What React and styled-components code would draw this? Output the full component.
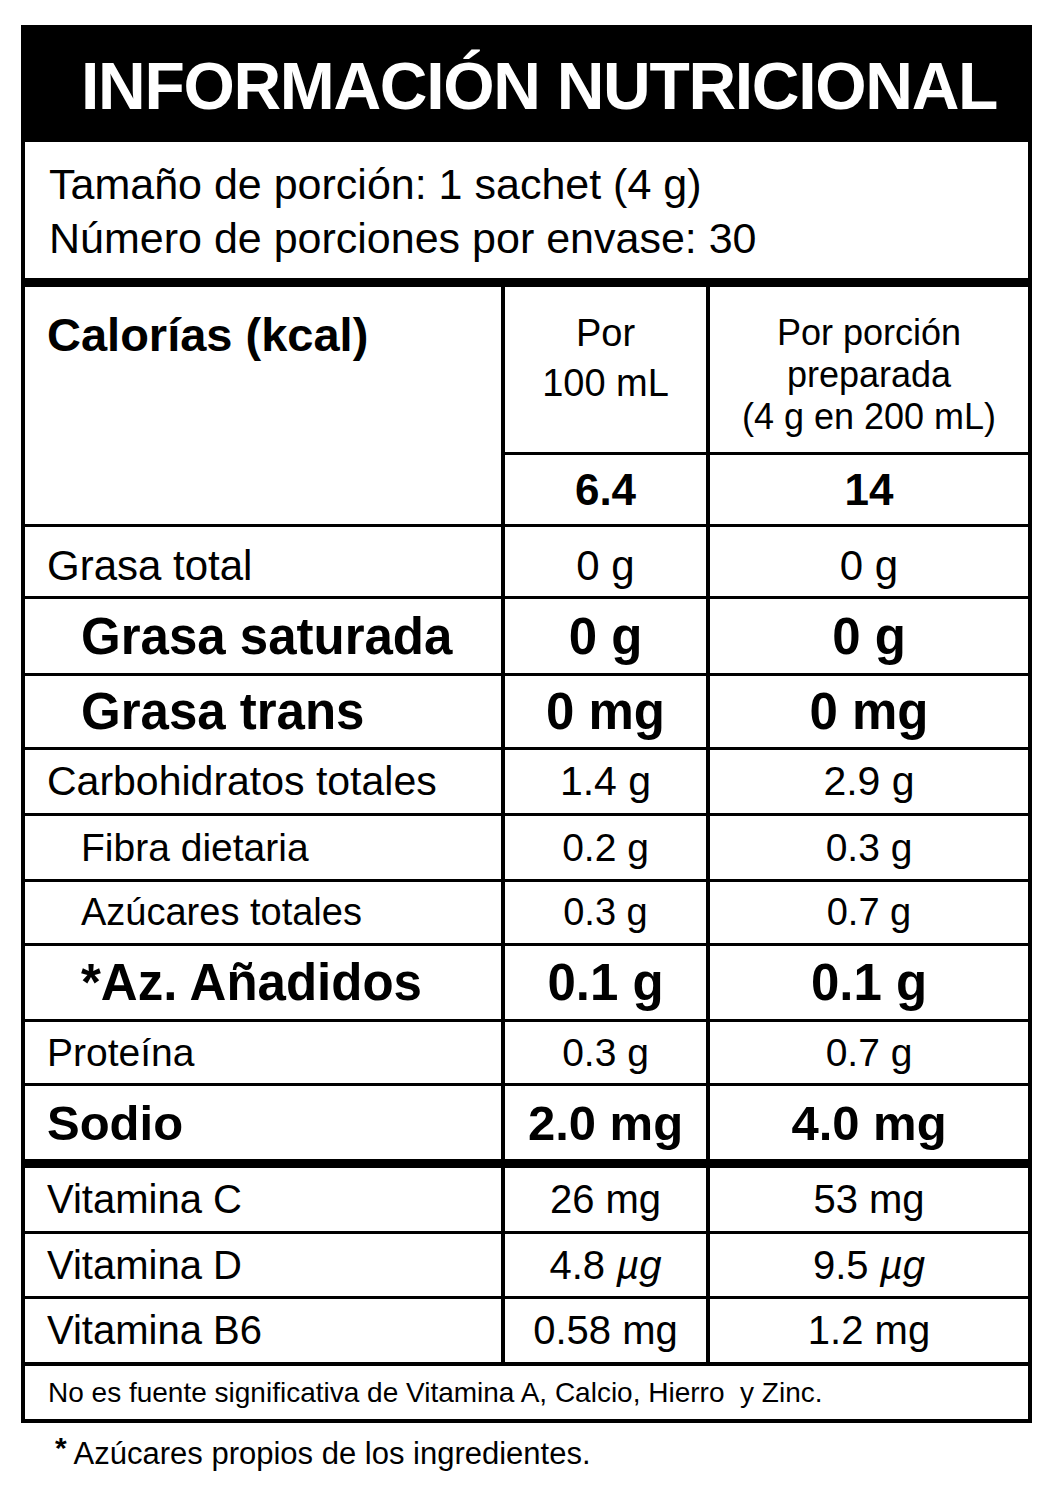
import React from 'react';
import styled, { createGlobalStyle } from 'styled-components';

const GlobalStyle = createGlobalStyle`
  html, body {
    margin: 0;
    padding: 0;
    background: #fff;
  }
  body {
    font-family: "Liberation Sans", Arial, sans-serif;
    color: #000;
  }
`;

const COLS = '476px 201px 318px';

const nutrients = [
  { label: 'Grasa total', a: '0 g', b: '0 g', h: 69, size: 42, shift: 8 },
  { label: 'Grasa saturada', a: '0 g', b: '0 g', h: 74, bold: true, indent: true, size: 51 },
  { label: 'Grasa trans', a: '0 mg', b: '0 mg', h: 71, bold: true, indent: true, size: 51 },
  { label: 'Carbohidratos totales', a: '1.4 g', b: '2.9 g', h: 63, size: 41 },
  { label: 'Fibra dietaria', a: '0.2 g', b: '0.3 g', h: 63, indent: true, size: 39 },
  { label: 'Azúcares totales', a: '0.3 g', b: '0.7 g', h: 61, indent: true, size: 38 },
  { label: '*Az. Añadidos', a: '0.1 g', b: '0.1 g', h: 73, bold: true, indent: true, size: 51 },
  { label: 'Proteína', a: '0.3 g', b: '0.7 g', h: 61, size: 39 },
  { label: 'Sodio', a: '2.0 mg', b: '4.0 mg', h: 73, bold: true, size: 49 },
];

const vitamins = [
  { label: 'Vitamina C', a: '26 mg', b: '53 mg', h: 63 },
  { label: 'Vitamina D', a: '4.8', b: '9.5', unit: 'µg', h: 62 },
  { label: 'Vitamina B6', a: '0.58 mg', b: '1.2 mg', h: 63 },
];

const App = () => {
  const renderValue = (v, unit) =>
    unit ? (
      <>
        {v}
        {'\u00a0'}
        <Micro>{unit}</Micro>
      </>
    ) : (
      v
    );

  const renderRows = (rows) =>
    rows.map((r) => (
      <Row key={r.label} $height={r.h} $shift={r.shift}>
        <Cell $indent={r.indent} $bold={r.bold} $size={r.size}>
          {r.label}
        </Cell>
        <Cell $center $bold={r.bold} $size={r.size}>
          {renderValue(r.a, r.unit)}
        </Cell>
        <Cell $center $bold={r.bold} $size={r.size}>
          {renderValue(r.b, r.unit)}
        </Cell>
      </Row>
    ));

  return (
    <Page>
      <GlobalStyle />
      <Label>
        <Header>INFORMACIÓN NUTRICIONAL</Header>
        <Serving>
          <div>Tamaño de porción: 1 sachet (4 g)</div>
          <div>Número de porciones por envase: 30</div>
        </Serving>

        <Table $top={9}>
          <CaloriesRow>
            <CaloriesLabel>Calorías (kcal)</CaloriesLabel>
            <ColHead $lh={50} $pad={21} $size={38}>
              Por
              <br />
              100 mL
            </ColHead>
            <ColHead $lh={42} $pad={25} $size={36}>
              Por porción
              <br />
              preparada
              <br />
              (4 g en 200 mL)
            </ColHead>
            <Cell $center $bold $size={44}>6.4</Cell>
            <Cell $center $bold $size={44}>14</Cell>
          </CaloriesRow>
          {renderRows(nutrients)}
        </Table>

        <Table $top={9}>{renderRows(vitamins)}</Table>

        <Note>No es fuente significativa de Vitamina A, Calcio, Hierro&nbsp; y Zinc.</Note>
      </Label>
      <Footnote>
        <Star>*</Star> Azúcares propios de los ingredientes.
      </Footnote>
    </Page>
  );
};

const Page = styled.div`
  width: 1054px;
  box-sizing: border-box;
  padding: 25px 0 0 21px;
`;

const Label = styled.div`
  width: 1011px;
  box-sizing: border-box;
  border: 4px solid #000;
  background: #fff;
`;

const Header = styled.div`
  height: 113px;
  background: #000;
  color: #fff;
  display: flex;
  align-items: center;
  padding-left: 56px;
  font-size: 66px;
  font-weight: 700;
  letter-spacing: -1.3px;
  white-space: nowrap;
`;

const Serving = styled.div`
  height: 136px;
  box-sizing: border-box;
  padding: 15px 0 0 24px;
  font-size: 43px;
  line-height: 54px;
`;

const Table = styled.div`
  display: flex;
  flex-direction: column;
  gap: 3px;
  background: #000;
  border-top: ${(p) => p.$top}px solid #000;
`;

const Row = styled.div`
  display: grid;
  grid-template-columns: ${COLS};
  column-gap: 4px;
  height: ${(p) => p.$height}px;

  & > div {
    padding-top: ${(p) => p.$shift || 0}px;
  }
`;

const CaloriesRow = styled.div`
  display: grid;
  grid-template-columns: ${COLS};
  grid-template-rows: 165px 69px;
  gap: 3px 4px;
`;

const Cell = styled.div`
  background: #fff;
  display: flex;
  align-items: center;
  justify-content: ${(p) => (p.$center ? 'center' : 'flex-start')};
  padding-left: ${(p) => (p.$center ? 0 : p.$indent ? 56 : 22)}px;
  font-size: ${(p) => p.$size || 40}px;
  font-weight: ${(p) => (p.$bold ? 700 : 400)};
  white-space: nowrap;
`;

const CaloriesLabel = styled.div`
  grid-row: span 2;
  background: #fff;
  padding: 20px 0 0 22px;
  font-size: 47px;
  font-weight: 700;
  line-height: 55px;
`;

const ColHead = styled.div`
  background: #fff;
  text-align: center;
  padding-top: ${(p) => p.$pad}px;
  font-size: ${(p) => p.$size}px;
  line-height: ${(p) => p.$lh}px;
`;

const Micro = styled.span`
  font-style: italic;
`;

const Note = styled.div`
  height: 53px;
  border-top: 4px solid #000;
  display: flex;
  align-items: center;
  padding-left: 23px;
  font-size: 28px;
  white-space: nowrap;
`;

const Footnote = styled.div`
  padding: 5px 0 0 34px;
  font-size: 31px;
  line-height: 40px;
`;

const Star = styled.span`
  font-weight: 700;
  font-size: 30px;
  vertical-align: 6px;
`;

export default App;
